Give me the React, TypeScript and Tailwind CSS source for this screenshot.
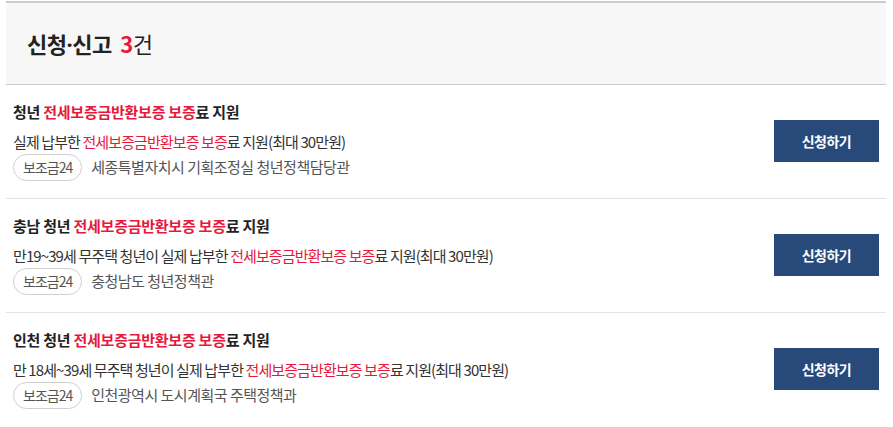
import React from "react";

interface Item {
  prefix: string;
  desc: string;
  org: string;
}

const items: Item[] = [
  { prefix: "청년", desc: "실제 납부한", org: "세종특별자치시 기획조정실 청년정책담당관" },
  { prefix: "충남 청년", desc: "만19~39세 무주택 청년이 실제 납부한", org: "충청남도 청년정책관" },
  { prefix: "인천 청년", desc: "만 18세~39세 무주택 청년이 실제 납부한", org: "인천광역시 도시계획국 주택정책과" },
];

const HL = "전세보증금반환보증 보증";

const Row: React.FC<{ item: Item; last: boolean }> = ({ item, last }) => (
  <div
    className={`flex items-center justify-between px-[7px] pt-4 pb-[17px] ${
      last ? "" : "border-b border-[#e3e3e3]"
    }`}
  >
    <div className="flex flex-col">
      <p className="text-[15px] leading-[22px] font-bold tracking-[-0.25px] text-[#222]">
        {item.prefix} <span className="text-[#e8173d]">{HL}</span>료 지원
      </p>
      <p className="mt-2 text-[15px] leading-[22px] tracking-[-0.9px] text-[#333]">
        {item.desc} <span className="text-[#e8173d]">{HL}</span>료 지원(최대 30만원)
      </p>
      <div className="mt-px flex items-center">
        <span className="flex h-[27px] items-center rounded-full border border-[#cfcfcf] px-[9px] text-[14px] tracking-[-1px] text-[#555]">
          보조금24
        </span>
        <span className="ml-[9px] text-[15px] tracking-[-0.5px] text-[#555]">{item.org}</span>
      </div>
    </div>
    <button className="flex h-[42px] w-[105px] items-center justify-center bg-[#284a7a] text-[14px] font-bold tracking-[-0.5px] text-white">
      신청하기
    </button>
  </div>
);

export default function App() {
  return (
    <div
      className="min-h-screen bg-white pt-px"
      style={{ fontFamily: '"Noto Sans CJK KR", "Noto Sans", sans-serif' }}
    >
      <div className="mx-[6px] w-[880px]">
        <div className="flex h-[84px] items-center border-t-2 border-b border-[#cccccc] bg-[#f7f7f7] pl-[21px]">
          <h2 className="text-[22px] font-bold tracking-[-0.5px] text-[#222]">
            신청<span className="font-['Noto_Sans']">·</span>신고{" "}
            <span className="ml-1 text-[#e8173d]">3</span>
            <span className="font-normal">건</span>
          </h2>
        </div>
        {items.map((it, i) => (
          <Row key={i} item={it} last={i === items.length - 1} />
        ))}
      </div>
    </div>
  );
}
